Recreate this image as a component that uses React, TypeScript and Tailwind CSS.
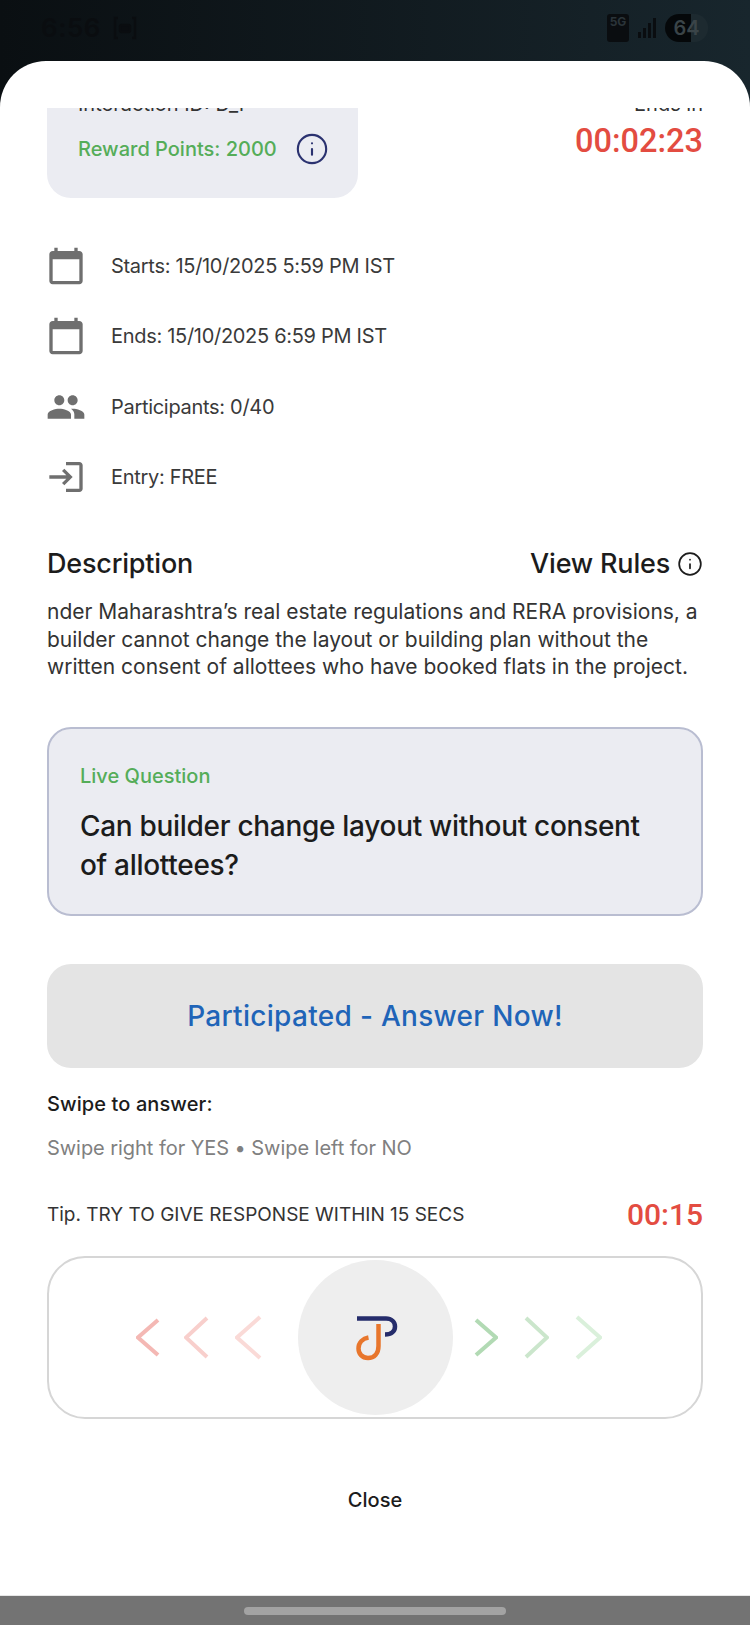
import React from "react";
import { Info } from "lucide-react";
import { MdCalendarToday, MdPeople, MdLogin } from "react-icons/md";

const rows = [
  { icon: <MdCalendarToday size={40} />, label: "Starts: 15/10/2025 5:59 PM IST" },
  { icon: <MdCalendarToday size={40} />, label: "Ends: 15/10/2025 6:59 PM IST" },
  { icon: <MdPeople size={40} />, label: "Participants: 0/40" },
  { icon: <MdLogin size={40} />, label: "Entry: FREE" },
];

function Chevron({ dir, w, h, color }: { dir: "left" | "right"; w: number; h: number; color: string }) {
  const d = dir === "left" ? `M${w - 2} 2 L2 ${h / 2} L${w - 2} ${h - 2}` : `M2 2 L${w - 2} ${h / 2} L2 ${h - 2}`;
  return (
    <svg width={w} height={h} viewBox={`0 0 ${w} ${h}`} fill="none">
      <path d={d} stroke={color} strokeWidth="4" />
    </svg>
  );
}

function Logo() {
  return (
    <svg width="44" height="46" viewBox="0 0 44 46" fill="none">
      <path d="M1 2.5 H30 C35.5 2.5 39 6 39 10.5 C39 15.5 35.5 18.5 29 18.5" stroke="#252c6b" strokeWidth="4.5" />
      <path d="M22.5 8 V30 C22.5 38 18 42 12 42 C6 42 2.5 37.5 2.5 32.5 C2.5 26.5 7 22.5 12.5 21.5" stroke="#e8762c" strokeWidth="4.5" />
    </svg>
  );
}

export default function App() {
  return (
    <div className="flex h-[1625px] w-[750px] flex-col overflow-hidden bg-gradient-to-r from-[#0a0f12] to-[#18262d] font-['Inter','Noto_Sans',sans-serif]">
      {/* status bar */}
      <div className="flex h-[61px] shrink-0 items-center justify-between pl-[41px] pr-[42px] pb-[5px] text-[#0a0d10]">
        <div className="flex items-center gap-[12px]">
          <span className="text-[26px] font-semibold leading-none tracking-[0.5px]">6:56</span>
          <svg width="24" height="26" viewBox="0 0 24 26" fill="none" stroke="#0a0d10" strokeWidth="2.5">
            <path d="M5 3H2v20h3M19 3h3v20h-3" />
            <rect x="7" y="10" width="10" height="7" rx="2" fill="#0a0d10" />
          </svg>
        </div>
        <div className="flex items-center gap-[8px]">
          <span className="flex h-[28px] w-[22px] items-start justify-center rounded-[3px] bg-[#0a0d10] text-[12px] font-bold leading-[15px] text-[#2a3439]">5G</span>
          <svg width="20" height="20" viewBox="0 0 20 20" fill="#0a0d10">
            <rect x="1" y="14" width="3" height="6" />
            <rect x="6" y="10" width="3" height="10" />
            <rect x="11" y="5" width="3" height="15" />
            <rect x="16" y="0" width="3" height="20" />
          </svg>
          <span className="flex h-[28px] w-[43px] items-center justify-center rounded-full bg-gradient-to-r from-[#05080a] from-60% to-[#1d2a30] to-60% text-[20px] font-semibold text-[#3a4448]">64</span>
        </div>
      </div>

      {/* bottom sheet */}
      <div className="flex min-h-0 flex-1 flex-col rounded-t-[46px] bg-white pt-[47px]">
        <div className="min-h-0 flex-1 overflow-hidden">
          <div className="mt-[-28px] px-[47px]">
            {/* header cards, scrolled part way under the sheet edge */}
            <div className="flex items-start justify-between">
              <div className="h-[118px] w-[311px] rounded-b-[24px] bg-[#ebecf2] pl-[31px] pt-[12px]">
                <p className="text-[20px] leading-[24px] text-[#333]">Interaction ID: D_1</p>
                <div className="mt-[16px] flex items-center gap-[18px]">
                  <span className="text-[20px] font-medium leading-[28px] text-[#55ad59]">Reward Points: 2000</span>
                  <Info size={34} strokeWidth={1.5} className="text-[#2b3270]" />
                </div>
              </div>
              <div className="flex flex-col items-end pt-[12px]">
                <p className="text-[20px] leading-[24px] text-[#333]">Ends in</p>
                <p className="mt-[5px] font-['Roboto',sans-serif] text-[32.5px] font-medium leading-[40px] text-[#e34c41]">00:02:23</p>
              </div>
            </div>

            {/* event details */}
            <div className="mt-[48px] flex flex-col gap-[30.3px]">
              {rows.map((row) => (
                <div key={row.label} className="flex h-[40px] items-center gap-[25px]">
                  <span className="-ml-px flex w-[40px] justify-center text-[#6f6f6f]">{row.icon}</span>
                  <span className="text-[20px] tracking-[-0.3px] text-[#3a3a3a]">{row.label}</span>
                </div>
              ))}
            </div>

            {/* description */}
            <div className="mt-[47px] flex items-center justify-between">
              <h2 className="text-[27px] font-medium leading-[40px] tracking-[-0.2px] text-[#1c1c1c]">Description</h2>
              <div className="flex items-center gap-[7px]">
                <span className="text-[27px] font-medium tracking-[-0.2px] text-[#1c1c1c]">View Rules</span>
                <Info size={26} strokeWidth={1.6} className="text-[#1c1c1c]" />
              </div>
            </div>
            <p className="mt-[14px] text-[21px] leading-[27.5px] text-[#333]">
              nder Maharashtra’s real estate regulations and RERA provisions, a builder cannot change the layout or building plan without the written consent of allottees who have booked flats in the project.
            </p>

            {/* live question */}
            <div className="mt-[46px] h-[189px] rounded-[24px] border-2 border-[#b9bdd1] bg-[#ebecf2] pl-[31px] pt-[33px]">
              <p className="text-[20px] font-medium leading-[28px] text-[#55ad59]">Live Question</p>
              <p className="mt-[17px] w-[580px] text-[28px] font-medium leading-[39px] tracking-[-0.3px] text-[#1c1c1c]">Can builder change layout without consent of allottees?</p>
            </div>

            {/* action */}
            <div className="mt-[48px] flex h-[104px] items-center justify-center rounded-[24px] bg-[#e4e4e4] text-[28px] font-medium tracking-[0.3px] text-[#1f64b8]">
              Participated - Answer Now!
            </div>

            <p className="mt-[22px] text-[20px] font-medium leading-[28px] tracking-[0.1px] text-[#1c1c1c]">Swipe to answer:</p>
            <p className="mt-[16px] text-[20px] leading-[28px] tracking-[-0.05px] text-[#808080]">Swipe right for YES • Swipe left for NO</p>

            <div className="mt-[33px] flex items-center justify-between">
              <span className="text-[19px] text-[#333]">Tip. TRY TO GIVE RESPONSE WITHIN 15 SECS</span>
              <span className="font-['Roboto',sans-serif] text-[30px] font-medium leading-[40px] text-[#e34c41]">00:15</span>
            </div>

            {/* swipe control */}
            <div className="mt-[21px] flex h-[163px] items-center rounded-[38px] border-2 border-[#d6d6d6]">
              <div className="flex flex-1 justify-end">
                <div className="mr-[36px] flex items-center">
                  <Chevron dir="left" w={24} h={39} color="#f4b8b4" />
                  <div className="ml-[24px]">
                    <Chevron dir="left" w={25} h={43} color="#f8cfcc" />
                  </div>
                  <div className="ml-[26px]">
                    <Chevron dir="left" w={27} h={45} color="#fadad7" />
                  </div>
                </div>
              </div>
              <div className="flex h-[155px] w-[155px] items-center justify-center rounded-full bg-[#eeeeee] pl-[6px] pt-[3px]">
                <Logo />
              </div>
              <div className="flex flex-1">
                <div className="ml-[21px] flex items-center gap-[26px]">
                  <Chevron dir="right" w={24} h={39} color="#b2dab4" />
                  <Chevron dir="right" w={25} h={43} color="#cbe6cc" />
                  <Chevron dir="right" w={27} h={45} color="#daf0db" />
                </div>
              </div>
            </div>

            <p className="mt-[67px] text-center text-[20px] font-medium leading-[28px] text-[#1c1c1c]">Close</p>
          </div>
        </div>
      </div>

      {/* nav bar */}
      <div className="flex h-[30px] shrink-0 justify-center border-t border-[#e6e6e6] bg-[#737373] pt-[11px]">
        <div className="h-[8px] w-[262px] rounded-full bg-[#a3a3a3]" />
      </div>
    </div>
  );
}
